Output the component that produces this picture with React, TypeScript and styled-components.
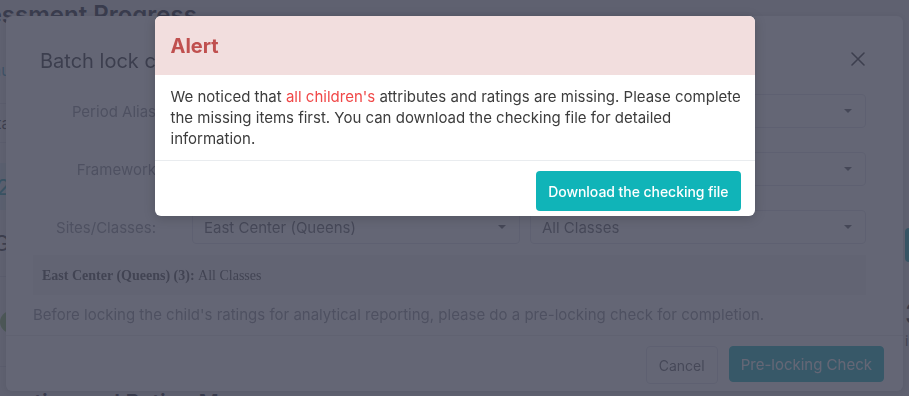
import React from "react";
import styled, { createGlobalStyle } from "styled-components";

const Global = createGlobalStyle`
  html, body { margin: 0; padding: 0; background: #fff; overflow: hidden; }
  body { font-family: Inter, "Noto Sans", Arial, sans-serif; }
  * { box-sizing: border-box; }
`;

/* ---------- background page ---------- */

const Page = styled.div`
  margin-left: -56px;
  width: 1100px;
  height: 396px;
  overflow: hidden;
  display: grid;
  grid-template-rows: 30px 354px 1fr;
  color: #1f2937;
`;

const PageTitle = styled.h1`
  margin: 0;
  font-size: 24px;
  line-height: 30px;
  font-weight: 600;
  color: #1f2533;
  white-space: nowrap;
`;

const PageBody = styled.div`
  display: grid;
  grid-template-columns: 62px 899px 1fr;
`;

const SideList = styled.div`
  display: flex;
  flex-direction: column;
  padding-top: 20px;
`;

const SideRow = styled.div<{ $h: number; $line?: boolean; $bg?: string }>`
  height: ${(p) => p.$h}px;
  display: flex;
  align-items: center;
  justify-content: flex-end;
  white-space: nowrap;
  border-bottom: ${(p) => (p.$line ? "1px solid #e3e6ea" : "none")};
  background: ${(p) => p.$bg ?? "transparent"};
`;

const SideText = styled.span<{ $c: string; $size: number; $up?: number }>`
  color: ${(p) => p.$c};
  font-size: ${(p) => p.$size}px;
  margin-right: -4px;
  margin-top: ${(p) => -(p.$up ?? 0)}px;
`;

const Dot = styled.span`
  width: 22px;
  height: 22px;
  border-radius: 50%;
  background: #8fc46a;
  margin-right: -16px;
`;

const Hidden = styled.div``;

const RightCol = styled.div`
  display: flex;
  flex-direction: column;
  padding-top: 198px;
`;

const RightBtn = styled.div`
  width: 80px;
  height: 34px;
  background: #12b5b9;
  border-radius: 4px;
`;

const BigNum = styled.div`
  margin-top: 38px;
  font-size: 28px;
  line-height: 28px;
  font-weight: 600;
  color: #222;
`;

const SmallText = styled.div`
  margin-top: 4px;
  font-size: 14px;
  color: #555;
`;

const SectionTitle = styled.h2`
  margin: 0;
  padding-top: 4px;
  font-size: 22px;
  line-height: 28px;
  font-weight: 600;
  color: #1f2533;
  white-space: nowrap;
`;

/* ---------- overlays ---------- */

const Backdrop = styled.div<{ $tone: string; $z: number }>`
  position: fixed;
  inset: 0;
  z-index: ${(p) => p.$z};
  background: ${(p) => p.$tone};
  display: flex;
  justify-content: center;
  align-items: flex-start;
  padding-top: 16px;
`;

/* ---------- batch lock dialog ---------- */

const Dialog = styled.div`
  width: 897px;
  height: 375px;
  background: #fff;
  border-radius: 6px;
  box-shadow: 0 1px 6px rgba(0, 0, 0, 0.15);
  display: flex;
  flex-direction: column;
`;

const DialogHeader = styled.div`
  display: flex;
  align-items: center;
  justify-content: space-between;
  padding: 31px 38px 0 34px;
`;

const DialogTitle = styled.div`
  font-size: 20px;
  line-height: 28px;
  color: #2a2c30;
`;

const CloseBtn = styled.button`
  border: 0;
  background: none;
  padding: 0;
  width: 14px;
  height: 14px;
  display: flex;
  margin-top: -4px;
  color: #303133;
`;

const Form = styled.div`
  padding: 19px 37px 0 27px;
  display: flex;
  flex-direction: column;
  gap: 24px;
`;

const FormRow = styled.div`
  display: grid;
  grid-template-columns: 123px 1fr;
  column-gap: 36px;
  align-items: center;
`;

const Label = styled.div`
  text-align: right;
  font-size: 15px;
  color: #8a8d93;
  white-space: nowrap;
`;

const SelectPair = styled.div`
  display: grid;
  grid-template-columns: 328px 1fr;
  gap: 10px;
`;

const Select = styled.div`
  height: 34px;
  border: 1px solid #dcdfe6;
  border-radius: 4px;
  padding: 0 13px 0 11px;
  display: flex;
  align-items: center;
  justify-content: space-between;
  font-size: 15px;
  color: #606266;
  white-space: nowrap;
`;

const Caret = styled.span`
  width: 0;
  height: 0;
  border-left: 4px solid transparent;
  border-right: 4px solid transparent;
  border-top: 4px solid #5a5d63;
`;

const Summary = styled.div`
  margin: 11px 37px 0 27px;
  height: 40px;
  background: #f1f2f4;
  padding: 2px 9px 0;
  display: flex;
  align-items: center;
  font-family: "Liberation Serif", "Times New Roman", serif;
  font-size: 14px;
  color: #4a4a4a;
  white-space: nowrap;
`;

const Desc = styled.p`
  margin: 9px 0 0 27px;
  font-size: 15px;
  line-height: 22px;
  color: #8a8d93;
`;

const DialogFooter = styled.div`
  margin-top: auto;
  height: 56px;
  border-top: 1px solid #e6e8eb;
  padding: 10px 19px 0;
  display: flex;
  justify-content: flex-end;
  align-items: flex-start;
  gap: 11px;
`;

const Button = styled.button<{ $primary?: boolean }>`
  font-family: inherit;
  height: ${(p) => (p.$primary ? 36 : 38)}px;
  padding: 0 ${(p) => (p.$primary ? 11 : 12)}px;
  border-radius: 4px;
  border: 1px solid ${(p) => (p.$primary ? "#12b5b9" : "#dcdfe6")};
  background: ${(p) => (p.$primary ? "#12b5b9" : "#fff")};
  color: ${(p) => (p.$primary ? "#fff" : "#606266")};
  font-size: ${(p) => (p.$primary ? 15 : 14)}px;
  cursor: pointer;
`;

/* ---------- alert ---------- */

const Alert = styled.div`
  width: 600px;
  background: #fff;
  border-radius: 6px;
  overflow: hidden;
  box-shadow: 0 2px 12px rgba(0, 0, 0, 0.18);
`;

const AlertHeader = styled.div`
  height: 59px;
  background: #f2dede;
  padding: 0 16px;
  display: flex;
  align-items: center;
  font-size: 20px;
  font-weight: 700;
  color: #c0504f;
`;

const AlertBody = styled.div`
  padding: 11px 6px 11px 16px;
  font-size: 15px;
  line-height: 21px;
  color: #3c3c3c;
  border-bottom: 1px solid #e9ecef;
`;

const Danger = styled.span`
  color: #f04848;
`;

const AlertFooter = styled.div`
  display: flex;
  justify-content: flex-end;
  padding: 10px 14px 5px;
`;

const DownloadButton = styled.button`
  font-family: inherit;
  height: 40px;
  padding: 0 12px;
  border: 0;
  border-radius: 4px;
  background: #10b4b8;
  color: #fff;
  font-size: 14px;
  font-weight: 500;
  letter-spacing: -0.05px;
  cursor: pointer;
`;

const CloseIcon = () => (
  <svg width="14" height="14" viewBox="0 0 14 14" fill="none" stroke="currentColor" strokeWidth="1.6" strokeLinecap="round">
    <path d="M1 1L13 13M13 1L1 13" />
  </svg>
);

export default function App() {
  return (
    <>
      <Global />
      <Page>
        <PageTitle>Assessment Progress</PageTitle>
        <PageBody>
          <SideList>
            <SideRow $h={54} $line>
              <SideText $c="#3aa6c6" $size={15} $up={12}>Menu</SideText>
            </SideRow>
            <SideRow $h={39} $line>
              <SideText $c="#333" $size={15}>Data</SideText>
            </SideRow>
            <SideRow $h={20} />
            <SideRow $h={47} $bg="#e2f4f5">
              <SideText $c="#1ba9b0" $size={22}>12</SideText>
            </SideRow>
            <SideRow $h={67} $line>
              <SideText $c="#333" $size={22}>G</SideText>
            </SideRow>
            <SideRow $h={90} $line>
              <Dot />
            </SideRow>
          </SideList>
          <Hidden />
          <RightCol>
            <RightBtn />
            <BigNum>3</BigNum>
            <SmallText>in progress</SmallText>
          </RightCol>
        </PageBody>
        <SectionTitle>Observation and Rating Map</SectionTitle>
      </Page>

      <Backdrop $tone="rgba(0, 0, 0, 0.12)" $z={10}>
        <Dialog>
          <DialogHeader>
            <DialogTitle>Batch lock children's ratings</DialogTitle>
            <CloseBtn aria-label="Close">
              <CloseIcon />
            </CloseBtn>
          </DialogHeader>
          <Form>
            <FormRow>
              <Label>Period Alias</Label>
              <Select>
                <span>2024-2025 Fall</span>
                <Caret />
              </Select>
            </FormRow>
            <FormRow>
              <Label>Framework</Label>
              <Select>
                <span>DRDP2015-PRESCHOOL</span>
                <Caret />
              </Select>
            </FormRow>
            <FormRow>
              <Label>Sites/Classes:</Label>
              <SelectPair>
                <Select>
                  <span>East Center (Queens)</span>
                  <Caret />
                </Select>
                <Select>
                  <span>All Classes</span>
                  <Caret />
                </Select>
              </SelectPair>
            </FormRow>
          </Form>
          <Summary>
            <b>East Center (Queens) (3):</b>&nbsp;All Classes
          </Summary>
          <Desc>
            Before locking the child's ratings for analytical reporting, please do a pre-locking check for completion.
          </Desc>
          <DialogFooter>
            <Button>Cancel</Button>
            <Button $primary>Pre-locking Check</Button>
          </DialogFooter>
        </Dialog>
      </Backdrop>

      <Backdrop $tone="rgba(64, 67, 85, 0.81)" $z={20}>
        <Alert>
          <AlertHeader>Alert</AlertHeader>
          <AlertBody>
            We noticed that <Danger>all children's</Danger> attributes and ratings are missing. Please complete the
            missing items first. You can download the checking file for detailed information.
          </AlertBody>
          <AlertFooter>
            <DownloadButton>Download the checking file</DownloadButton>
          </AlertFooter>
        </Alert>
      </Backdrop>
    </>
  );
}
